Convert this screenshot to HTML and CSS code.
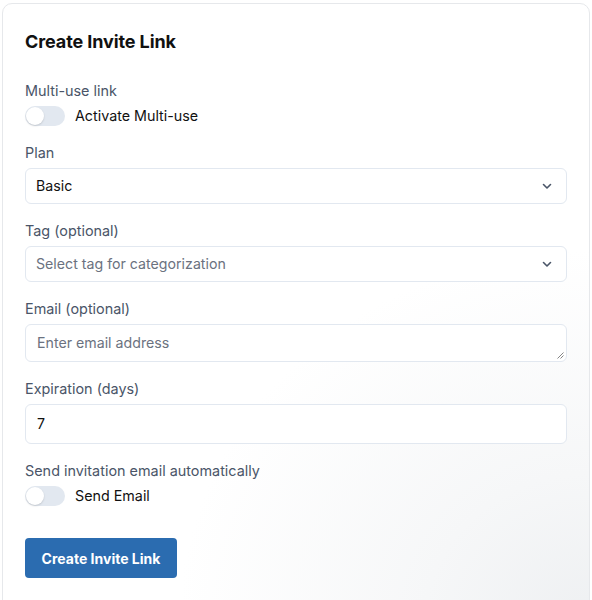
FILE: index.html
```html
<!DOCTYPE html>
<html lang="en">
<head>
<meta charset="utf-8">
<title>Create Invite Link</title>
<link rel="stylesheet" href="styles.css">
</head>
<body>
<div class="card">
  <h2 class="title">Create Invite Link</h2>

  <div class="group first">
    <div class="label">Multi-use link</div>
    <label class="switch-row">
      <span class="switch"><span class="knob"></span></span>
      <span class="switch-text">Activate Multi-use</span>
    </label>
  </div>

  <div class="group">
    <div class="label">Plan</div>
    <div class="select">
      <span class="value">Basic</span>
      <svg class="chev" width="12" height="12" viewBox="0 0 12 12"><path d="M2.5 4.5 L6 8 L9.5 4.5" fill="none" stroke="#4a5568" stroke-width="1.6" stroke-linecap="round" stroke-linejoin="round"/></svg>
    </div>
  </div>

  <div class="group">
    <div class="label">Tag (optional)</div>
    <div class="select">
      <span class="value placeholder">Select tag for categorization</span>
      <svg class="chev" width="12" height="12" viewBox="0 0 12 12"><path d="M2.5 4.5 L6 8 L9.5 4.5" fill="none" stroke="#4a5568" stroke-width="1.6" stroke-linecap="round" stroke-linejoin="round"/></svg>
    </div>
  </div>

  <div class="group">
    <div class="label">Email (optional)</div>
    <div class="textarea">
      <span class="value placeholder">Enter email address</span>
      <svg class="grip" width="8" height="8" viewBox="0 0 8 8"><path d="M7.5 1.5 L1.5 7.5 M7.5 4.5 L4.5 7.5" stroke="#777" stroke-width="0.9"/></svg>
    </div>
  </div>

  <div class="group">
    <div class="label">Expiration (days)</div>
    <div class="input"><span class="value">7</span></div>
  </div>

  <div class="group">
    <div class="label">Send invitation email automatically</div>
    <label class="switch-row">
      <span class="switch"><span class="knob"></span></span>
      <span class="switch-text">Send Email</span>
    </label>
  </div>

  <button class="btn">Create Invite Link</button>
</div>
</body>
</html>
```

FILE: styles.css
```css
html, body {
  margin: 0;
  padding: 0;
  background: #ffffff;
}
body {
  font-family: Inter, "Noto Sans", "Liberation Sans", sans-serif;
  color: #1a202c;
}
.card {
  margin: 3px 2px 0 2px;
  min-height: 620px;
  box-sizing: border-box;
  border: 1px solid #e6e8eb;
  border-radius: 10px;
  padding: 24px 22px;
  background: radial-gradient(ellipse 70% 60% at 100% 100%, #eef0f2 0%, #f6f7f8 40%, #ffffff 100%);
}
.title {
  margin: 0;
  font-size: 18px;
  line-height: 28px;
  font-weight: 700;
  color: #111111;
  letter-spacing: -0.1px;
}
.group {
  margin-top: 17px;
}
.group.first {
  margin-top: 25px;
}
.label {
  font-size: 14.4px;
  line-height: 20px;
  color: #4a5568;
  margin-bottom: 5px;
}
.switch-row {
  display: flex;
  align-items: center;
  gap: 10px;
  height: 20px;
}
.switch {
  width: 40px;
  height: 20px;
  border-radius: 10px;
  background: #e2e8f0;
  display: flex;
  align-items: center;
  padding: 0 1px;
  box-sizing: border-box;
}
.knob {
  width: 18px;
  height: 18px;
  border-radius: 50%;
  background: #ffffff;
  box-shadow: 0 1px 2px rgba(0,0,0,0.15);
}
.switch-text {
  font-size: 14.3px;
  line-height: 20px;
  color: #111111;
}
.select, .input, .textarea {
  box-sizing: border-box;
  border: 1px solid #e2e8f0;
  border-radius: 6px;
  background: #ffffff;
  display: flex;
  align-items: center;
  font-size: 14.2px;
  color: #111111;
  position: relative;
}
.select {
  height: 36px;
  padding: 0 12px 0 10px;
  justify-content: space-between;
}
.textarea {
  height: 38px;
  padding: 0 11px;
}
.input {
  height: 40px;
  padding: 0 11px;
}
.value {
  line-height: 20px;
}
.placeholder {
  color: #6b7280;
}
.chev {
  margin-right: 1px;
}
.grip {
  position: absolute;
  right: 2px;
  bottom: 2px;
}
.btn {
  margin-top: 32px;
  width: 152px;
  height: 40px;
  border: none;
  border-radius: 4px;
  background: #2b6cb0;
  color: #ffffff;
  font-family: Inter, "Noto Sans", "Liberation Sans", sans-serif;
  font-size: 14px;
  font-weight: 700;
  padding: 0;
}
```
